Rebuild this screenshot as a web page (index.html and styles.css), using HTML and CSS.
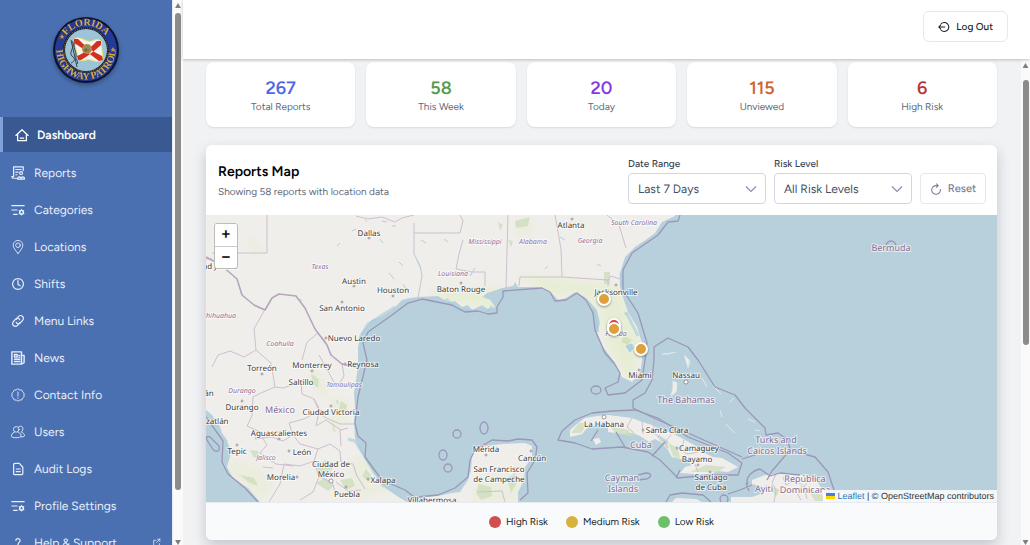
FILE: index.html
```html
<!DOCTYPE html>
<html lang="en">
<head>
<meta charset="utf-8">
<meta name="viewport" content="width=device-width, initial-scale=1">
<title>Dashboard</title>
<link rel="stylesheet" href="styles.css">
</head>
<body>
<div class="app">
  <aside class="sidebar">
    <div class="brand">
      <svg class="seal" viewBox="0 0 68 68" role="img" aria-label="Florida Highway Patrol seal">
        <defs>
          <path id="arc-top" d="M9.500 34A24.500 24.500 0 0 1 58.500 34"/>
          <path id="arc-bottom" d="M8 20A29.500 29.500 0 1 0 60 20"/>
        </defs>
        <circle cx="34" cy="34" r="33" fill="#0e1230"/>
        <circle cx="34" cy="34" r="31" fill="#243a96"/>
        <circle cx="34" cy="34" r="23" fill="#15182c"/>
        <circle cx="34" cy="34" r="22" fill="none" stroke="#9b8748" stroke-width="1" stroke-dasharray="1 1"/>
        <circle cx="34" cy="34" r="21" fill="#9cc3d6"/>
        <path d="M22 23c7-4 11 4 18 2 4-2 6-2 9 0l2 18c-6 6-11-1-17 1-3 1-5 1-8-1z" fill="#f6f3ee" stroke="#e8e27a" stroke-width="1"/>
        <path d="M22 23l4 0c6 6 15 13 24 17l1 4-4 1c-7-5-16-13-25-18zM49 25l-4 0c-6 6-12 12-20 15l1 4 3 0c7-4 14-10 20-15z" fill="#cf3022"/>
        <circle cx="35" cy="33" r="5" fill="#b8873e"/>
        <circle cx="35" cy="33" r="3" fill="#6f9c7a"/>
        <path d="M34 36v-4M32 34h5" stroke="#a3492b"/>
        <path d="M19 24l6 27M20 25c4 5-4 12 0 15 5 4 1 6-1 7M22 27c-1 6 3 9 2 13s3 5 1 8" fill="none" stroke="#37424b" stroke-width="1"/>
        <text class="seal-text"><textPath href="#arc-top" startOffset="50%">FLORIDA</textPath></text>
        <text class="seal-text"><textPath href="#arc-bottom" startOffset="50%">HIGHWAY PATROL</textPath></text>
        <path d="M10 18l1 2 2 0-2 1 1 2-2-1-2 1 1-2-2-1 2 0zM61 31l1 2 2 0-2 1 1 2-2-1-2 1 1-2-2-1 2 0z" fill="#c19a3e"/>
      </svg>
    </div>
    <nav class="nav" aria-label="Main">
      <a class="nav-link is-active" href="#"><svg class="icon" viewBox="0 0 16 16"><path d="M1 8.500 8 2l7 6.500M3 7v7.500h10V7M6 11.500h4"/></svg>Dashboard</a>
      <a class="nav-link" href="#"><svg class="icon" viewBox="0 0 16 16"><path d="M6.500 14H3a2 2 0 0 1-2-2h2V1h11v4M5.500 4h6M5.500 7h2.500M5.500 10h1.500"/><circle cx="11.500" cy="8" r="1.700"/><path d="M7.500 15c0-3.500 4-3.500 4 0 0-3.500 4-3.500 4 0z"/></svg>Reports</a>
      <a class="nav-link" href="#"><svg class="icon" viewBox="0 0 16 16"><path d="M1 3h14M1 8h6M3 13h4"/><circle cx="12" cy="10.500" r="2.200"/><path d="M12 7.500v1M12 12.500v1M9.500 9l1 .6M13.600 11.500l1 .6M14.500 9l-1 .6M10.500 11.500l-1 .6"/></svg>Categories</a>
      <a class="nav-link" href="#"><svg class="icon thin" viewBox="0 0 16 16"><path d="M8 15.500C5 11.500 2.500 9 2.500 6a5.500 5.500 0 0 1 11 0c0 3-2.500 5.500-5.500 9.500z"/><circle cx="8" cy="6" r="2.600"/></svg>Locations</a>
      <a class="nav-link" href="#"><svg class="icon" viewBox="0 0 16 16"><circle cx="8" cy="8" r="6.200"/><path d="M8 4v4.500l2.500 1.500"/></svg>Shifts</a>
      <a class="nav-link" href="#"><svg class="icon" viewBox="0 0 16 16"><path d="M6 6l2.500-3a3 3 0 0 1 5 4l-3 3.500c-1.500 1.500-4 .5-4.500-1M10 10l-2.500 3a3 3 0 0 1-5-4l3-3.500C7 4 9.500 5 10 6.500"/></svg>Menu Links</a>
      <a class="nav-link" href="#"><svg class="icon bold" viewBox="0 0 16 16"><path d="M1 1h11v14H1zM12 5h3v8a2 2 0 0 1-3 1M4 4h3v3H4zM9 5h1M9 7h1M4 9.500h6M4 12h6"/></svg>News</a>
      <a class="nav-link" href="#"><svg class="icon thin" viewBox="0 0 16 16"><path d="M8 1l2 1.200 2.300.1 1 2.100L15 6l-.2 2 .2 2-1.700 1.500-1 2.200-2.300.1L8 15l-2-1.200-2.300-.1-1-2.200L1 10l.2-2L1 6l1.700-1.600 1-2.100L6 2.200zM8 4.500v4.800M8 11.200v.6"/></svg>Contact Info</a>
      <a class="nav-link" href="#"><svg class="icon thin" viewBox="0 0 16 16"><circle cx="6" cy="5" r="3.200"/><path d="M4 8C1 9 .5 11.500.5 13c0 2 10.500 2 11 0 0-2-.5-4-3.500-5M8.500 2.500c2-2.500 5.500-1 5 2 0 2-1 3-2 3.500 3 1 4 3 4 4.500-.5 1-2 1-4 1"/></svg>Users</a>
      <a class="nav-link" href="#"><svg class="icon" viewBox="0 0 16 16"><path d="M4.500 1.500h5L13.500 6v7a1.500 1.500 0 0 1-1.500 1.500H4.500A1.500 1.500 0 0 1 3 13V3a1.500 1.500 0 0 1 1.500-1.500zM6 8h4.500M6 11h4.500"/></svg>Audit Logs</a>
      <a class="nav-link" href="#"><svg class="icon" viewBox="0 0 16 16"><path d="M1 3h14M1 8h6M3 13h4"/><circle cx="12" cy="10.500" r="2.200"/><path d="M12 7.500v1M12 12.500v1M9.500 9l1 .6M13.600 11.500l1 .6M14.500 9l-1 .6M10.500 11.500l-1 .6"/></svg>Profile Settings</a>
      <a class="nav-link" href="#"><svg class="icon" viewBox="0 0 16 16"><path d="M5.500 5c.5-3 5-2.500 5 0 0 2-2.500 2-2.500 5M8 13v1"/></svg>Help &amp; Support<svg class="icon external" viewBox="0 0 16 16"><path d="M7 4H3v10h10v-4M10 2h4v4M14 2 8 8"/></svg></a>
    </nav>
  </aside>
  <div class="scrollbar side-scroll" aria-hidden="true"><span class="arrow up"></span><span class="thumb"></span><span class="arrow down"></span></div>

  <div class="page">
    <header class="topbar">
      <button class="btn logout" type="button"><svg class="icon" viewBox="0 0 16 16"><path d="M4 4a6 6 0 1 1 0 8M1 8h8M3.500 5.500 1 8l2.500 2.500"/></svg>Log Out</button>
    </header>
    <div class="body">
      <main class="content">
        <section class="stats" aria-label="Totals">
          <div class="stat"><strong class="blue">267</strong><span>Total Reports</span></div>
          <div class="stat"><strong class="green">58</strong><span>This Week</span></div>
          <div class="stat"><strong class="purple">20</strong><span>Today</span></div>
          <div class="stat"><strong class="orange">115</strong><span>Unviewed</span></div>
          <div class="stat"><strong class="red">6</strong><span>High Risk</span></div>
        </section>
        <section class="panel">
          <div class="panel-head">
            <div class="heading"><h1>Reports Map</h1><p>Showing 58 reports with location data</p></div>
            <form class="filters">
              <div class="field"><label for="range">Date Range</label><div class="select"><select id="range"><option>Last 7 Days</option></select><svg class="chevron" viewBox="0 0 12 8"><path d="M1 1.500 6 6.500 11 1.500"/></svg></div></div>
              <div class="field"><label for="risk">Risk Level</label><div class="select"><select id="risk"><option>All Risk Levels</option></select><svg class="chevron" viewBox="0 0 12 8"><path d="M1 1.500 6 6.500 11 1.500"/></svg></div></div>
              <button class="btn reset" type="reset"><svg class="icon" viewBox="0 0 16 16"><path d="M11 3.500H7.500a5.800 5.800 0 1 0 6.300 5M8.500 1l2.500 2.500L8.500 6"/></svg>Reset</button>
            </form>
          </div>
          <div class="map">
            <svg class="map-canvas" viewBox="206 215 791 287" preserveAspectRatio="xMidYMid slice" role="img" aria-label="Map of reports">
              <defs><filter id="soft" x="-20%" y="-20%" width="140%" height="140%"><feGaussianBlur stdDeviation="3"/></filter>
              <clipPath id="land-clip"><use href="#mainland"/></clipPath></defs>
              <path id="mainland" class="land" d="M206 215V410L212 415 220 427 222 433 227 440 231 453 227 467 233 478 248 488 260 502H407L418 499 425 497 438 496 452 493 460 492 468 480 471 470 472 456 475 447 488 446 502 444 525 443 532 446 532 457 525 467 524 480 518 492 518 502H407L400 498 385 488 372 470 360 450 355 438 354 423 355 409 354 393 358 367 358 347 362 332 372 320 381 317 392 310 402 300 410 298 418 297 438 296 448 302 455 301 462 307 468 305 472 310 482 305 488 309 495 307 490 300 482 297 487 293 502 288 513 286 515 282 518 287 538 287 552 293 558 300 566 298 575 292 585 297 591 303 597 310 600 323 597 333 603 347 610 356 615 363 622 377 632 382 640 373 642 360 642 343 637 327 628 312 624 301 620 287 620 273 625 257 635 247 647 239 655 233 662 222 675 216V215z"/>
              <g class="vegetation" clip-path="url(#land-clip)" filter="url(#soft)">
                <path d="M515 273 620 285 642 350 630 382 606 345 599 309 577 292 555 297z"/><path d="M426 291 500 287 498 310 450 302z"/>
                <path class="faint" d="M230 460 262 468 275 485 262 498 225 475zM365 455 395 490 350 500 350 460zM480 475 535 475 520 502H470zM312 365 330 385 325 400 308 378zM330 395 348 400 345 425 330 430zM520 220 535 225 528 238 515 235zM245 235 265 250 254 255z"/>
              </g>
              <g class="woods"><path d="M250 450l8 1 3 8-8-2zM240 475l14 3 4 8-10-4zM311 374l8 5-1 9-5-4zM341 401l6 4-1 7-7-3zM332 420l4 13-3-3zM317 465l8-5 9 6-4 6-12 1zM316 483l9-5 9 8-6 5zM340 480l12-2 3 8-9 4zM366 469l6 8-3 5-7-6zM479 484l12 3 1 9-11 4-5-7zM507 478l8-5 3 8-7 12zM515 221l15-4-2 9-12 2zM604 272h6v12h-6zM605 289h5v9h-5zM624 336l8 4-4 5-7-3zM498 222l5 3-3 6zM508 240l5 1-2 6z"/></g>
              <path class="land" d="M562 439 570 437 570 430 577 424 585 418 597 416 608 415 632 418 642 422 652 425 662 430 674 434 685 440 696 446 702 452 713 457 722 458 731 463 738 467 728 472 718 471 708 475 695 474 680 473 685 467 692 465 685 460 672 457 668 450 662 443 655 439 649 442 640 436 632 433 622 434 608 432 608 427 601 424 588 427 582 434zM593 439l6-1 2 4-5 3zM752 480 765 475 785 473 798 474 808 477 818 483 826 495 828 502H731V497H752L761 494 764 487 752 484zM672 502 676 498 696 499 702 502z"/>
              <path class="isle" d="M673 381l4 2-1 9-5 4 2-8zM684 355l5 5-1 8M662 354h6l8-2M713 386l8 8M726 424l9 9M734 398l-4 4M755 422l-7-3M755 430l5 1M689 360l1 5M702 378l5 9M720 410l2 7"/>
              <path class="woods" d="M571 433l8-10 9 0-7 10zM610 426l18 4 7 7-20-4zM668 443l10 5 2 11-7-3zM690 472l16-7 20 2-9 5zM658 439l8 1 3 10zM768 484l12 6-4 7zM810 493l12 1 3 7h-10z"/>
              <path class="shoal" d="M348 439l7 2 7 11 12 20 10 15M360 337l8-13 27-17M446 299l12 11 15 1M487 313l5-7M593 309l5 23M603 350l9 13M626 312l12 24M622 286l-1-13M668 443l-10-7"/>
              <g class="borders">
                <path d="M267 215V253H212M414 215 402 218 395 222 382 217 368 219 356 216M414 223V254L420 266 422 276 418 298M414 233H460L463 221 460 215M463 240 459 254 456 269 472 272H485V286M508 215 506 288M555 215 561 249 562 277H520L519 286M562 277 608 280 611 276 620 279M608 280V286M607 215 619 225 626 248M206 259H212"/>
                <path d="M264 311 254 329 256 350 244 357 230 351 218 355 212 367M256 350 271 363 275 387 261 393 253 397 252 416 247 426 258 431 255 439 272 437 283 441 293 435 289 423 304 419 319 411 314 399 302 394 301 382 283 388 274 387M302 360 307 342 318 333 326 342M319 355 329 373 337 388 344 376 342 363M319 411 316 426 326 420 341 430 348 428M314 399 324 417 340 424 354 424M293 435 300 444 318 449 314 461 300 466 284 464 280 484 269 502M318 449 330 444 340 451 341 462 353 464 357 476 365 489M340 430 341 446M258 431 267 445 260 453 276 464 293 466M314 461 319 477 313 492 300 500M319 477 332 482 336 494M336 482 348 491 361 490M505 502 502 491 478 492"/>
                <path d="M654 419v14l5 4M632 418l-5 9 7 6M642 422l1 12M671 435l-6 7 3 6M684 440l-3 10 6 4 11-2M695 464l3 8M776 474l-4 9 4 7-2 12M783 477l3 8 10-5 8 7 3 12M789 490l8 3 4 7M809 479l-5 8 14 6"/>
              </g>
              <path class="frontier" d="M206 257 221 265 237 279 242 295 254 305 265 310 272 298 279 294 296 296 305 308 315 329 327 345 331 355 342 364 359 368"/>
              <g class="marine">
                <path d="M206 417 223 441 222 462 228 474 245 488 258 502"/>
                <path d="M415 502 417 497 438 495 455 488 468 477 470 460 475 450 492 440 508 441 518 439 532 440 537 447 535 460 527 473 528 493 520 500M405 490 382 480 365 457 366 443 358 436 355 423 358 397 367 360 363 343 368 332 392 315 408 303 422 299 452 305 465 312 478 311 488 314 497 313 497 307 503 297 503 291 542 288 550 292 555 301 566 300 577 293 586 300 593 313 595 330 605 353 614 363 620 373 618 382 605 388 608 395 625 393 642 380 645 360 647 343 638 313 623 290 623 270 632 253 658 235 668 222 678 221 680 215M405 490 417 499"/>
                <path d="M654 360 654 347 668 338 688 347 698 360 715 387 735 395 745 408 765 428 766 435 778 433 788 440 790 450 815 457 828 472 834 490M654 360 652 380 645 393 633 400 633 408 658 420 688 433 742 457M790 450 772 471 767 480"/>
                <path d="M558 440 562 431 575 420 592 413 612 411 635 410 658 418 688 437 728 453 742 463 738 475 708 475 678 478 660 460 648 452 622 447 592 449 575 443zM598 430l-7 11M616 432l9 15M665 442l-13 14M680 470l-4 8M666 502l4-7 12-2 21 2 8 7M748 484c-4-7 6-14 12-15l10 7 10-3 20 2M746 483l3 8M757 450l-2 5-13 4M728 494l12-4 12-5"/>
                <circle cx="457" cy="434" r="4"/><ellipse cx="443" cy="455" rx="4" ry="5"/><circle cx="448" cy="468" r="4"/><ellipse cx="484" cy="428" rx="4" ry="6"/><ellipse cx="596" cy="390" rx="5" ry="4"/><circle cx="724" cy="499" r="4"/><circle cx="891" cy="246" r="5"/><path d="M638 475l8-2c7 0 5 5 0 6l-8 1M207 440c-2-5 3-4 5-1l7 7c2 6-4 7-7 2z"/>
              </g>
              <path class="lakes" d="M626 346l6-2 1 4-3 4zM389 273l5 6M403 284l5 8M399 262l4 4M380 239l3 4M392 226h4M356 229l-4 2M340 243l-3 3M382 221l5 1M417 260l4 9M263 467l10 1M337 400l1 4M624 313l3 2M300 299l2 2M365 220l2 2M421 240l5 3M444 239l4 3M475 268l-5 8M545 269l3-3M560 237l5 3M597 264l4 2"/>
              <g class="cities">
                <circle cx="369" cy="238" r="1"/><circle cx="354" cy="286" r="1"/><circle cx="393" cy="296" r="1"/><circle cx="342" cy="302" r="1"/><circle cx="461" cy="283" r="1"/><circle cx="572" cy="219" r="1"/><circle cx="616" cy="285" r="1"/><circle cx="326" cy="338" r="1"/><circle cx="345" cy="364" r="1"/><circle cx="262" cy="374" r="1"/><circle cx="312" cy="371" r="1"/><circle cx="242" cy="401" r="1"/><circle cx="331" cy="406" r="1"/><circle cx="279" cy="439" r="1"/><circle cx="237" cy="445" r="1"/><circle cx="289" cy="451" r="1"/><circle cx="297" cy="477" r="1"/><circle cx="331" cy="481" r="2"/><circle cx="346" cy="487" r="1"/><circle cx="368" cy="479" r="1"/><circle cx="486" cy="455" r="1"/><circle cx="531" cy="451" r="1"/><circle cx="604" cy="417" r="2"/><circle cx="686" cy="382" r="2"/><circle cx="639" cy="370" r="1"/><circle cx="643" cy="430" r="1"/><circle cx="677" cy="448" r="1"/><circle cx="698" cy="465" r="1"/><circle cx="710" cy="472" r="1"/>
              </g>
              <g class="place">
                <text x="369" y="236">Dallas</text><text x="354" y="284">Austin</text><text x="393" y="293">Houston</text><text x="342" y="311">San Antonio</text><text x="461" y="292">Baton Rouge</text><text x="571" y="228">Atlanta</text><text x="616" y="295">Jacksonville</text><text x="354" y="341">Nuevo Laredo</text><text x="363" y="367">Reynosa</text><text x="262" y="371">Torreón</text><text x="312" y="368">Monterrey</text><text x="301" y="385">Saltillo</text><text x="242" y="410">Durango</text><text x="331" y="415">Ciudad Victoria</text><text x="279" y="436">Aguascalientes</text><text x="237" y="454">Tepic</text><text x="302" y="455">León</text><text x="331" y="467">Ciudad de</text><text x="331" y="477">México</text><text x="281" y="480">Morelia</text><text x="347" y="497">Puebla</text><text x="383" y="483">Xalapa</text><text x="432" y="503">Villahermosa</text><text x="486" y="452">Mérida</text><text x="532" y="461">Cancún</text><text x="499" y="472">San Francisco</text><text x="499" y="482">de Campeche</text><text x="640" y="378">Miami</text><text x="686" y="378">Nassau</text><text x="604" y="427">La Habana</text><text x="667" y="433">Santa Clara</text><text x="699" y="451">Camaguey</text><text x="697" y="462">Bayamo</text><text x="711" y="480">Santiago</text><text x="711" y="490">de Cuba</text><text x="220" y="269">ad Juárez</text><text x="215" y="424">azatlán</text><text x="209" y="396">án</text>
              </g>
              <g class="state">
                <text x="320" y="269">Texas</text><text x="453" y="276">Louisiana</text><text x="485" y="244">Mississippi</text><text x="533" y="244">Alabama</text><text x="590" y="243">Georgia</text><text x="634" y="225">South Carolina</text><text x="280" y="346">Coahuila</text><text x="219" y="318">Chihuahua</text><text x="242" y="393">Durango</text><text x="344" y="387">Tamaulipas</text><text x="266" y="460">Jalisco</text><text x="616" y="336">Florida</text>
              </g>
              <g class="country">
                <text x="280" y="413">México</text><text x="891" y="251">Bermuda</text><text x="686" y="403">The Bahamas</text><text x="641" y="448">Cuba</text><text x="622" y="481">Cayman</text><text x="623" y="492">Islands</text><text x="776" y="443">Turks and</text><text x="777" y="454">Caicos Islands</text><text x="805" y="482">República</text><text x="805" y="493">Dominicana</text><text x="764" y="492">Ayiti</text>
              </g>
              <g class="markers"><circle class="high" cx="614" cy="325" r="6"/><circle cx="604" cy="299" r="6"/><circle cx="614" cy="329" r="6"/><circle cx="641" cy="349" r="6"/></g>
            </svg>
            <div class="zoom-control"><button type="button" aria-label="Zoom in">+</button><button type="button" aria-label="Zoom out">−</button></div>
            <div class="credit"><svg class="flag" viewBox="0 0 12 8" aria-hidden="true"><path fill="#4c7be1" d="M0 0h12v4H0z"/><path fill="#ffd500" d="M0 4h12v4H0z"/></svg><a href="#">Leaflet</a> | © OpenStreetMap contributors</div>
          </div>
          <div class="legend"><span class="key"><i class="dot dot-high"></i>High Risk</span><span class="key"><i class="dot dot-medium"></i>Medium Risk</span><span class="key"><i class="dot dot-low"></i>Low Risk</span></div>
        </section>
      </main>
      <div class="scrollbar page-scroll" aria-hidden="true"><span class="arrow up"></span><span class="thumb"></span><span class="arrow down"></span></div>
    </div>
  </div>
</div>
</body>
</html>
```
FILE: styles.css
```css
* { box-sizing: border-box; }
body { margin: 0; font-family: Figtree, Lato, "Liberation Sans", sans-serif; font-size: 12px; color: #171d28; text-rendering: geometricPrecision; }
button, select { font: inherit; color: inherit; text-rendering: inherit; }
h1, p { margin: 0; }

.app { display: grid; grid-template-columns: 172px 11px minmax(0, 1fr); height: 100vh; overflow: hidden; }

.sidebar { background: #4a70b1; overflow: hidden; }
.brand { display: flex; justify-content: center; padding: 16px 0 33px; }
.seal { width: 68px; height: 68px; filter: drop-shadow(0 2px 2px rgba(0, 0, 0, .3)); }
.seal-text { font-family: "Liberation Serif", serif; font-size: 10px; font-weight: 700; fill: #d4aa43; text-anchor: middle; }

.icon { width: 14px; height: 14px; flex: none; fill: none; stroke: currentColor; stroke-width: 1.4; stroke-linecap: round; stroke-linejoin: round; }
.icon.thin { stroke-width: 1; }
.icon.bold { stroke-width: 1.6; }
.nav { display: flex; flex-direction: column; gap: 2px; }
.nav-link { display: flex; align-items: center; gap: 9px; height: 35px; padding: 0 11px; font-size: 12px; color: #e9eff9; text-decoration: none; }
.nav-link.is-active { margin-bottom: 1px; border-left: 3px solid #7fa2dc; padding-left: 12px; gap: 8px; background: #3a5993; color: #fff; font-weight: 600; }
.external { width: 9px; height: 9px; margin-left: auto; }

.scrollbar { display: flex; flex-direction: column; align-items: center; gap: 5px; background: #fafafa; }
.side-scroll { border-left: 1px solid #e6ebf4; padding: 3px 0 0; }
.thumb { flex: none; width: 6px; border-radius: 3px; background: #8b8b8b; }
.side-scroll .thumb { height: 88%; }
.arrow { width: 6px; height: 5px; background: #7f7f7f; clip-path: polygon(50% 0, 100% 100%, 0 100%); }
.arrow.down { margin-top: auto; clip-path: polygon(0 0, 100% 0, 50% 100%); }

.page { display: flex; flex-direction: column; min-width: 0; min-height: 0; background: #f1f2f4; }
.topbar { position: relative; z-index: 1; flex: none; display: flex; justify-content: flex-end; padding: 11px 22px 17px; background: #fff; box-shadow: 0 1px 3px rgba(0, 0, 0, .22); }
.btn { display: flex; align-items: center; justify-content: center; gap: 6px; border: 1px solid #e7e8ee; border-radius: 6px; background: #fff; }
.btn .icon { width: 12px; height: 12px; }
.logout { height: 31px; padding: 0 14px; font-size: 10px; font-weight: 500; }

.body { flex: 1; display: flex; min-height: 0; }
.content { flex: 1; min-width: 0; padding: 3px 24px 8px 23px; overflow: hidden; }
.page-scroll { width: 9px; padding-top: 4px; }
.page-scroll .thumb { height: 55%; margin-top: 7px; }

.stats { display: grid; grid-template-columns: repeat(5, 1fr); gap: 11px; }
.stat { display: flex; flex-direction: column; align-items: center; height: 65px; padding-top: 15px; border-radius: 8px; background: #fff; box-shadow: 0 1px 2px rgba(0, 0, 0, .1); }
.stat strong { font-size: 18px; line-height: 22px; font-weight: 600; }
.stat span { font-size: 10px; line-height: 15px; color: #606876; }
.blue { color: #4e68e4; }
.green { color: #539c4e; }
.purple { color: #843be0; }
.orange { color: #cf6531; }
.red { color: #bd3434; }

.panel { margin-top: 18px; border-radius: 6px; overflow: hidden; background: #fff; box-shadow: 0 6px 14px rgba(20, 25, 50, .2); }
.panel-head { display: flex; justify-content: space-between; padding: 12px 11px 11px 12px; }
.heading { padding-top: 5px; }
.heading h1 { font-size: 14px; line-height: 20px; font-weight: 600; color: #000; }
.heading p { margin-top: 3px; font-size: 10px; line-height: 14px; color: #606876; }
.filters { display: flex; align-items: flex-end; gap: 8px; }
.field label { display: block; margin-bottom: 3px; font-size: 10px; line-height: 13px; font-weight: 500; color: #3c4454; }
.select { position: relative; }
.select select { display: block; width: 138px; height: 31px; padding: 0 9px; appearance: none; border: 1px solid #d0d6e4; border-radius: 4px; background: #fff; font-size: 12px; color: #465063; }
.chevron { position: absolute; right: 9px; top: 12px; width: 12px; height: 8px; fill: none; stroke: #8292ae; stroke-width: 1.2; pointer-events: none; }
.reset { width: 66px; height: 31px; border-radius: 4px; font-size: 11px; font-weight: 500; color: #748096; }

.map { position: relative; height: 287px; background: #b8d0dc; }
.map-canvas { display: block; width: 100%; height: 100%; }
.land { fill: #f0eeea; }
.vegetation { fill: #e6edd2; opacity: .85; }
.vegetation .faint { opacity: .6; }
.woods { fill: #ccdcb9; opacity: .75; }
.isle { fill: #f0eeea; stroke: #e4e9e6; stroke-width: 1; }
.shoal { fill: none; stroke: #a4cbdc; stroke-width: 3; opacity: .6; }
.borders { fill: none; stroke: #cdbfd0; stroke-width: 1; stroke-linejoin: round; }
.frontier { fill: none; stroke: #b6a5be; stroke-width: 1.6; stroke-linejoin: round; }
.marine { fill: none; stroke: #9a97b8; stroke-width: 1.3; stroke-linejoin: round; }
.lakes { fill: #abd0e2; stroke: #abd0e2; stroke-width: 1; }
.cities { fill: #fff; stroke: #777; stroke-width: .7; }
.place, .state, .country { font-family: "Noto Sans", sans-serif; text-anchor: middle; paint-order: stroke; stroke: rgba(255, 255, 255, .65); stroke-width: 2px; stroke-linejoin: round; }
.place { font-size: 8px; fill: #414141; }
.state { font-size: 7px; font-style: italic; fill: #8c719e; }
.country { font-size: 9px; fill: #826c91; }
.markers { fill: #dda03a; stroke: #fff; stroke-width: 2; filter: drop-shadow(0 1px 1px rgba(0, 0, 0, .4)); }
.markers .high { fill: #d3414a; }
.zoom-control { position: absolute; left: 8px; top: 8px; border: 1px solid #bcbcb9; border-radius: 3px; overflow: hidden; }
.zoom-control button { display: block; width: 22px; height: 22px; padding: 0; border: 0; background: #fff; font: 700 15px/22px "Liberation Sans", sans-serif; color: #111; }
.zoom-control button + button { border-top: 1px solid #ccc; }
.credit { position: absolute; right: 0; bottom: 0; padding: 0 3px; background: rgba(255, 255, 255, .82); font: 9px/12px "Liberation Sans", sans-serif; color: #333; }
.credit a { color: #2f78b4; text-decoration: none; }
.flag { width: 9px; height: 6px; margin-right: 2px; }

.legend { display: flex; justify-content: center; align-items: center; gap: 18px; height: 38px; border-top: 1px solid #e7eaee; background: #f9fafb; font-size: 10px; }
.key { display: flex; align-items: center; gap: 5px; }
.dot { width: 12px; height: 12px; border-radius: 50%; }
.dot-high { background: #d04f4c; }
.dot-medium { background: #d9b13f; }
.dot-low { background: #6bc069; }
```
